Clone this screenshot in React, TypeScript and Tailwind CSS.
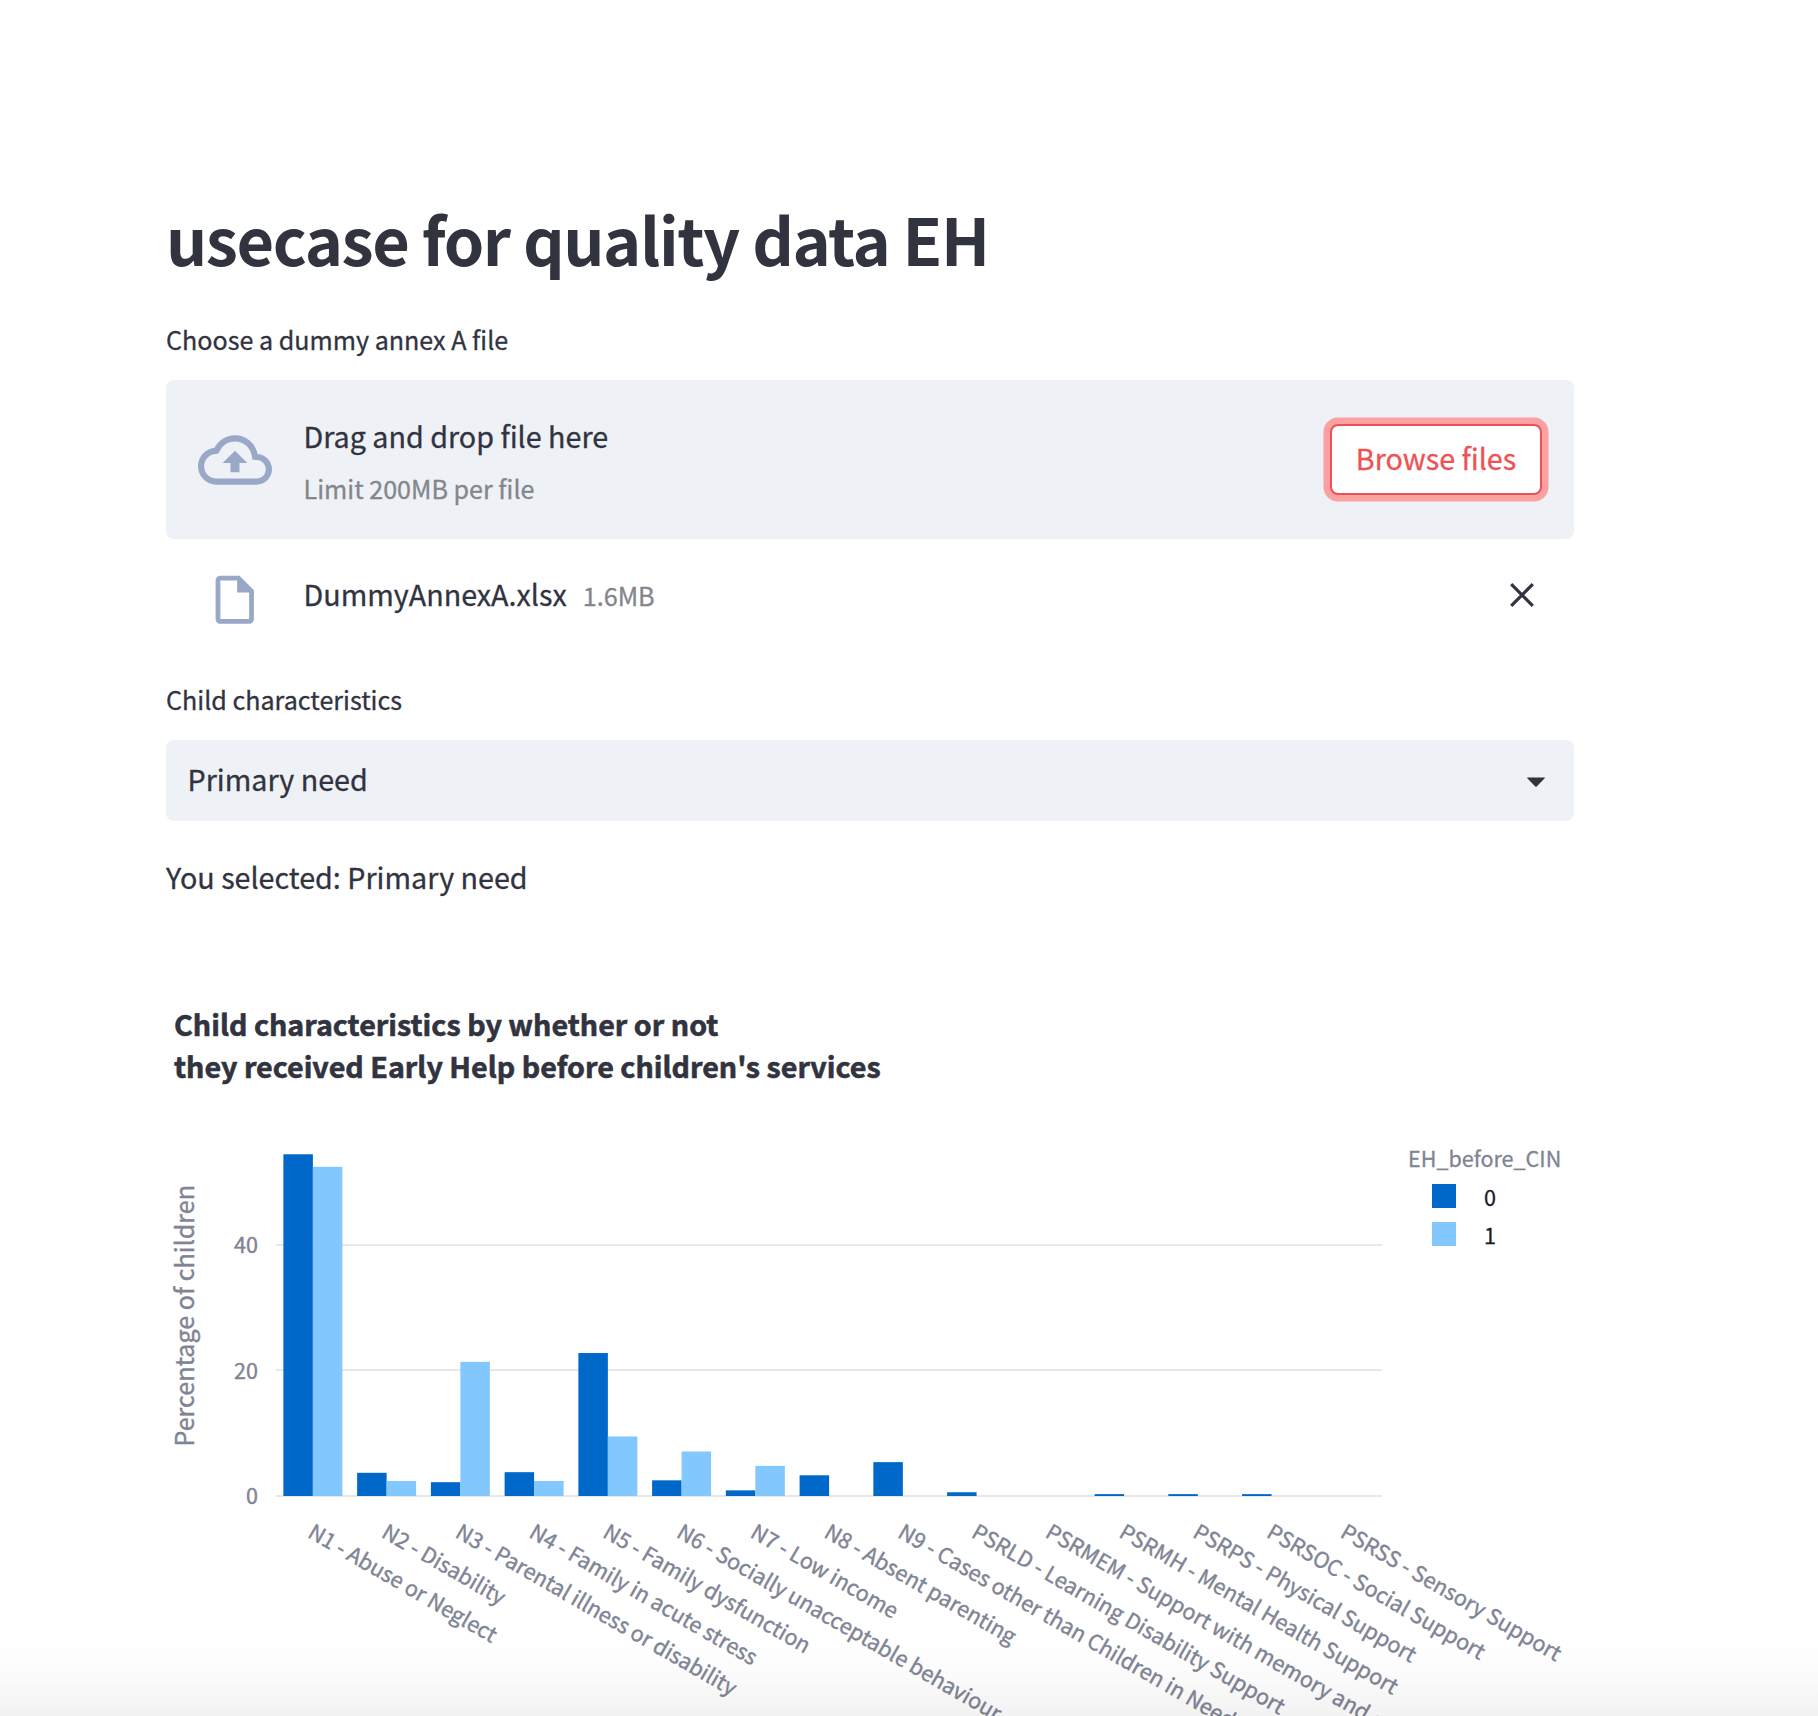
type Category = { label: string; without: number; withHelp: number };

// Percentages per primary need, split by EH_before_CIN
const categories: Category[] = [
  { label: 'N1 - Abuse or Neglect', without: 54.5, withHelp: 52.5 },
  { label: 'N2 - Disability', without: 3.7, withHelp: 2.4 },
  { label: 'N3 - Parental illness or disability', without: 2.2, withHelp: 21.4 },
  { label: 'N4 - Family in acute stress', without: 3.8, withHelp: 2.4 },
  { label: 'N5 - Family dysfunction', without: 22.8, withHelp: 9.5 },
  { label: 'N6 - Socially unacceptable behaviour', without: 2.5, withHelp: 7.1 },
  { label: 'N7 - Low income', without: 0.9, withHelp: 4.8 },
  { label: 'N8 - Absent parenting', without: 3.3, withHelp: 0 },
  { label: 'N9 - Cases other than Children in Need', without: 5.4, withHelp: 0 },
  { label: 'PSRLD - Learning Disability Support', without: 0.6, withHelp: 0 },
  { label: 'PSRMEM - Support with memory and cognition', without: 0, withHelp: 0 },
  { label: 'PSRMH - Mental Health Support', without: 0.3, withHelp: 0 },
  { label: 'PSRPS - Physical Support', without: 0.3, withHelp: 0 },
  { label: 'PSRSOC - Social Support', without: 0.3, withHelp: 0 },
  { label: 'PSRSS - Sensory Support', without: 0, withHelp: 0 },
];

const PLOT_LEFT = 110;
const PLOT_RIGHT = 1216.2;
const BASE_Y = 410;
const UNIT = 6.27;
const STEP = (PLOT_RIGHT - PLOT_LEFT) / categories.length;
const BAR = STEP * 0.4;

function CloudUploadIcon() {
  return (
    <svg viewBox="0 0 24 24" className="size-[74px] shrink-0 fill-[#9aa8c7]">
      <path d="M19.35 10.04A7.49 7.49 0 0 0 12 4C9.11 4 6.6 5.64 5.35 8.04A5.994 5.994 0 0 0 0 14c0 3.31 2.69 6 6 6h13c2.76 0 5-2.24 5-5 0-2.64-2.05-4.78-4.65-4.96zM19 18H6c-2.21 0-4-1.79-4-4 0-2.05 1.53-3.76 3.56-3.97l1.07-.11.5-.95A5.469 5.469 0 0 1 12 6c2.62 0 4.88 1.86 5.39 4.43l.3 1.5 1.53.11A2.98 2.98 0 0 1 22 15c0 1.65-1.35 3-3 3zM8 13h2.55v3h2.9v-3H16l-4-4z" />
    </svg>
  );
}

function FileIcon() {
  return (
    <svg viewBox="0 0 24 24" className="mt-[11px] size-[57.5px] shrink-0 fill-[#9aa8c7]">
      <path d="M14 2H6c-1.1 0-1.99.9-1.99 2L4 20c0 1.1.89 2 1.99 2H18c1.1 0 2-.9 2-2V8l-6-6zM6 20V4h7v5h5v11H6z" />
    </svg>
  );
}

function Uploader() {
  return (
    <section>
      <p className="mt-[42px] text-[25.1px] leading-10">Choose a dummy annex A file</p>
      <div className="mt-[21px] flex h-[159px] items-center rounded-lg bg-[#eef1f6] px-8">
        <CloudUploadIcon />
        <div className="ml-[31.5px] flex flex-1 flex-col gap-2 pt-px">
          <span className="text-[28.7px] leading-[48px]">Drag and drop file here</span>
          <span className="text-[25.1px] leading-10 text-[#84868c]">Limit 200MB per file</span>
        </div>
        <button className="h-[71px] w-[212px] rounded-lg border-2 border-[#ec5054] bg-white pb-[3px] text-[28.7px] leading-none text-[#ee5253] ring-[6.5px] ring-[#fca1a2]">
          Browse files
        </button>
      </div>
      <div className="flex h-[110px] items-center pr-10 pl-10">
        <FileIcon />
        <div className="ml-10 flex flex-1 items-baseline gap-4">
          <span className="text-[28.7px] leading-[48px]">DummyAnnexA.xlsx</span>
          <span className="text-[25.2px] text-[#84868c]">1.6MB</span>
        </div>
        <svg viewBox="0 0 24 24" className="mt-[2px] size-6 fill-none stroke-[#31333f] stroke-[3.2]">
          <path d="M1.2 1.2 22.8 22.8M22.8 1.2 1.2 22.8" />
        </svg>
      </div>
    </section>
  );
}

function Select() {
  return (
    <section className="mt-[30px]">
      <p className="text-[25.1px] leading-10">Child characteristics</p>
      <div className="mt-[21px] flex h-[81px] items-center justify-between rounded-lg bg-[#eef1f6] pr-[29px] pl-[21.5px] text-[28.7px]">
        <span className="-mt-[3px] leading-[48px]">Primary need</span>
        <svg viewBox="0 0 18 10" className="mt-[3px] h-[10px] w-[18px] fill-[#31333f]">
          <path d="M.6.4h16.8c.5 0 .6.5.3.8L9.7 9.5c-.4.4-1 .4-1.4 0L.3 1.2C0 .9.1.4.6.4z" />
        </svg>
      </div>
    </section>
  );
}

function Chart() {
  return (
    <figure>
      <figcaption className="mt-[102px] ml-2 text-[28.68px] leading-[42px] font-bold [-webkit-text-stroke:0.6px]">
        Child characteristics by whether or not
        <br />
        they received Early Help before children's services
      </figcaption>
      <svg viewBox="0 0 1408 630" className="-mt-px block h-[630px] w-[1408px] overflow-visible fill-[#808495] text-[21.55px]">
        {[0, 20, 40].map((tick) => (
          <g key={tick}>
            <rect x={PLOT_LEFT} y={BASE_Y - Math.ceil(tick * UNIT) - 1} width={PLOT_RIGHT - PLOT_LEFT} height="2" className="fill-[#e6e8eb]" />
            <text x="92" y={BASE_Y - tick * UNIT + 8} textAnchor="end" className="stroke-[#808495] stroke-[0.4]">
              {tick}
            </text>
          </g>
        ))}
        {categories.map((c, i) => {
          const left = PLOT_LEFT + i * STEP;
          const labelX = left + STEP / 2 - 6.3;
          return (
            <g key={c.label}>
              <rect x={left + STEP * 0.1} y={BASE_Y - c.without * UNIT} width={BAR} height={c.without * UNIT} className="fill-[#0068c9]" />
              <rect x={left + STEP / 2} y={BASE_Y - c.withHelp * UNIT} width={BAR} height={c.withHelp * UNIT} className="fill-[#83c7ff]" />
              <text transform={`translate(${labelX} 450.5) rotate(30)`} className="stroke-[#808495] stroke-[0.4]">
                {c.label}
              </text>
            </g>
          );
        })}
        <text transform="translate(28 360.5) rotate(-90)" className="stroke-[#808495] stroke-[0.4] text-[25.1px]">
          Percentage of children
        </text>
        <text x="1242" y="80.5" className="stroke-[#808495] stroke-[0.3]">EH_before_CIN</text>
        <rect x="1266" y="98" width="24" height="24" className="fill-[#0068c9]" />
        <rect x="1266" y="136" width="24" height="24" className="fill-[#83c7ff]" />
        <text x="1318" y="120" className="fill-[#1a1c24] stroke-[#1a1c24] stroke-[0.3]">0</text>
        <text x="1318" y="158" className="fill-[#1a1c24] stroke-[#1a1c24] stroke-[0.3]">1</text>
      </svg>
    </figure>
  );
}

export default function App() {
  return (
    <div className="relative h-[1716px] overflow-hidden bg-white pt-[199px] pl-[166px] font-['Noto_Sans_CJK_SC',sans-serif] text-[#31333f] [-webkit-text-stroke:0.3px]">
      <main className="w-[1408px]">
        <h1 className="text-[64.8px] leading-[78px] font-bold tracking-[-1.42px] [-webkit-text-stroke:0px]">usecase for quality data EH</h1>
        <Uploader />
        <Select />
        <p className="mt-8 text-[28.7px] leading-[48px]">You selected: Primary need</p>
        <Chart />
      </main>
      <div className="pointer-events-none absolute inset-x-0 bottom-0 h-[76px] bg-linear-to-b from-transparent via-black/[0.018] to-black/5" />
    </div>
  );
}
